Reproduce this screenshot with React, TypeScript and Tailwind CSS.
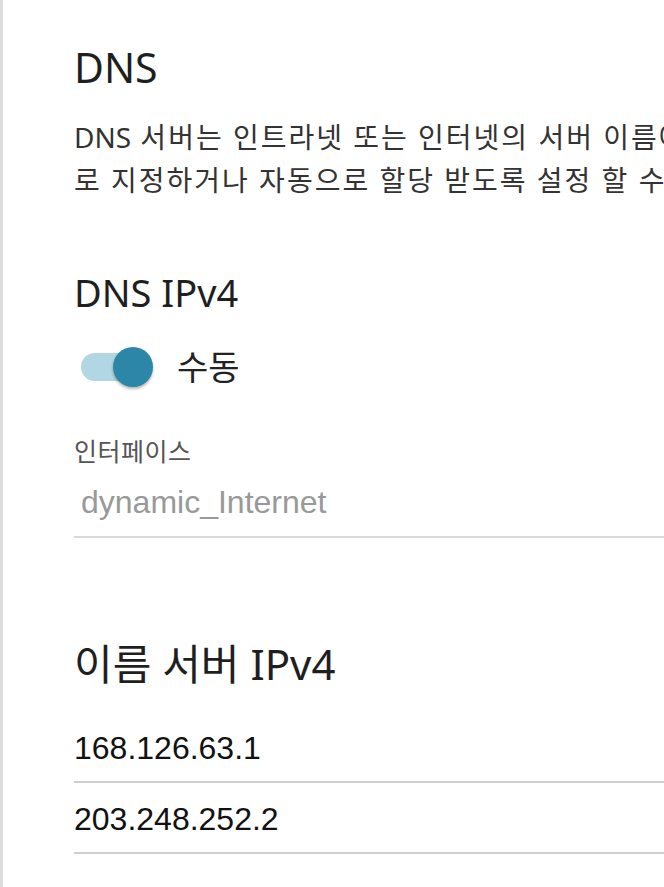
import * as React from "react";

const ko = "font-['Noto_Sans','Noto_Sans_CJK_KR',sans-serif]";
const arial = "font-['Liberation_Sans','Noto_Sans_CJK_KR',sans-serif]";

function Toggle({ on = true }: { on?: boolean }) {
  return (
    <div className="relative w-[76px] h-[44px] flex items-center shrink-0">
      <div className="ml-[7px] h-[28px] w-[60px] rounded-full bg-[#b0d7e3]" />
      <div
        className={
          "absolute top-[2px] size-[40px] rounded-full bg-[#2c86a8] shadow-[0_2px_3px_rgba(0,0,0,0.3)] " +
          (on ? "left-[39px]" : "left-0")
        }
      />
    </div>
  );
}

function IpRow({ value }: { value: string }) {
  return (
    <div className="h-[71px] flex items-center border-b-2 border-[#cfcfcf]">
      <span className={`${arial} text-[32px] text-[#111] pt-[3px]`}>{value}</span>
    </div>
  );
}

export default function App() {
  return (
    <div className="w-full h-[887px] bg-white border-l-[3px] border-[#dcdcdc] overflow-hidden">
      <div className="w-[1200px] pl-[71px] pt-[39px] flex flex-col">
        {/* DNS intro */}
        <h1 className={`${ko} text-[41px] leading-[56px] text-[#1f1f1f]`}>DNS</h1>
        <div className={`${ko} mt-[21px] text-[28px] leading-[43px] tracking-[2px] text-[#333] whitespace-nowrap`}>
          <p>
            <span className="tracking-normal">DNS</span> 서버는 인트라넷 또는 인터넷의 서버 이름에 대한 IP 주소를 변환합니다. DNS 서버 주소를 수동으
          </p>
          <p>로 지정하거나 자동으로 할당 받도록 설정 할 수 있습니다.</p>
        </div>

        {/* DNS IPv4 */}
        <h2 className={`${ko} mt-[66px] text-[38px] leading-[48px] text-[#1f1f1f]`}>DNS IPv4</h2>
        <div className="mt-[29px] flex items-center gap-[27px]">
          <Toggle />
          <span className={`${ko} text-[34px] leading-[44px] text-[#222]`}>수동</span>
        </div>

        <div className="mt-[47px] w-[700px]">
          <label className={`${arial} block text-[25px] leading-[32px] tracking-[0.5px] text-[#555]`}>인터페이스</label>
          <div className="mt-[0px] h-[70px] flex items-center border-b-2 border-[#d9d9d9] pl-[7px]">
            <span className={`${arial} text-[32px] text-[#999]`}>dynamic_Internet</span>
          </div>
        </div>

        {/* Name servers */}
        <h2 className={`${ko} mt-[100px] text-[42px] leading-[52px] text-[#1f1f1f]`}>이름 서버 IPv4</h2>
        <div className="mt-[22px] w-[700px] flex flex-col">
          <IpRow value="168.126.63.1" />
          <IpRow value="203.248.252.2" />
        </div>
      </div>
    </div>
  );
}
